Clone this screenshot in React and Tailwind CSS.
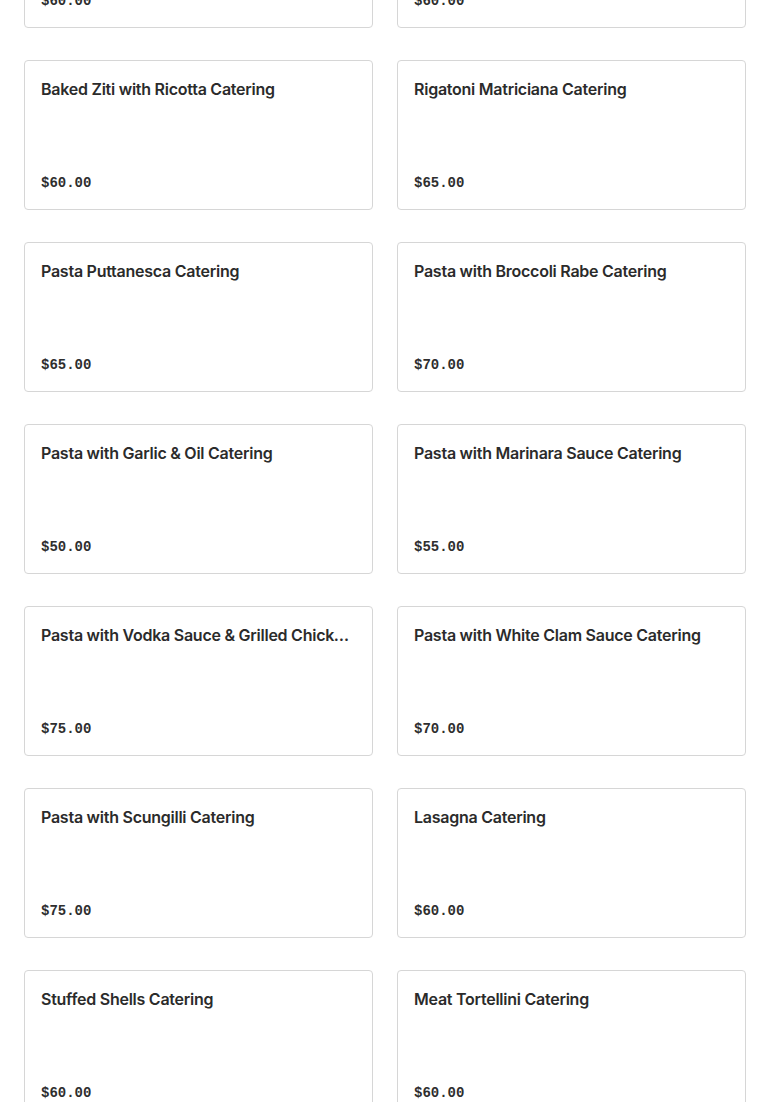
import React from 'react';

const items = [
  { name: 'Penne alla Vodka Catering', price: '$60.00' },
  { name: 'Ziti with Meat Sauce Catering', price: '$60.00' },
  { name: 'Baked Ziti with Ricotta Catering', price: '$60.00' },
  { name: 'Rigatoni Matriciana Catering', price: '$65.00' },
  { name: 'Pasta Puttanesca Catering', price: '$65.00' },
  { name: 'Pasta with Broccoli Rabe Catering', price: '$70.00' },
  { name: 'Pasta with Garlic & Oil Catering', price: '$50.00' },
  { name: 'Pasta with Marinara Sauce Catering', price: '$55.00' },
  { name: 'Pasta with Vodka Sauce & Grilled Chicken Catering', price: '$75.00' },
  { name: 'Pasta with White Clam Sauce Catering', price: '$70.00' },
  { name: 'Pasta with Scungilli Catering', price: '$75.00' },
  { name: 'Lasagna Catering', price: '$60.00' },
  { name: 'Stuffed Shells Catering', price: '$60.00' },
  { name: 'Meat Tortellini Catering', price: '$60.00' },
];

const App = () => {
  return (
    <div className="h-[1102px] overflow-hidden bg-white">
      <div className="px-6 -mt-[122px] grid grid-cols-2 gap-x-6 gap-y-8">
        {items.map((item) => (
          <div
            key={item.name}
            className="h-[150px] border border-[#d6d6d6] rounded-[4px] px-4 pt-4 pb-4 flex flex-col justify-between min-w-0"
          >
            <div className="text-[16px] leading-6 font-semibold text-[#2b2b2b] truncate font-['Inter',sans-serif] tracking-[-0.25px]">
              {item.name}
            </div>
            <div className="text-[14px] leading-5 font-bold text-[#2e2e2e] font-['Liberation_Mono',monospace]">
              {item.price}
            </div>
          </div>
        ))}
      </div>
    </div>
  );
};

export default App;
